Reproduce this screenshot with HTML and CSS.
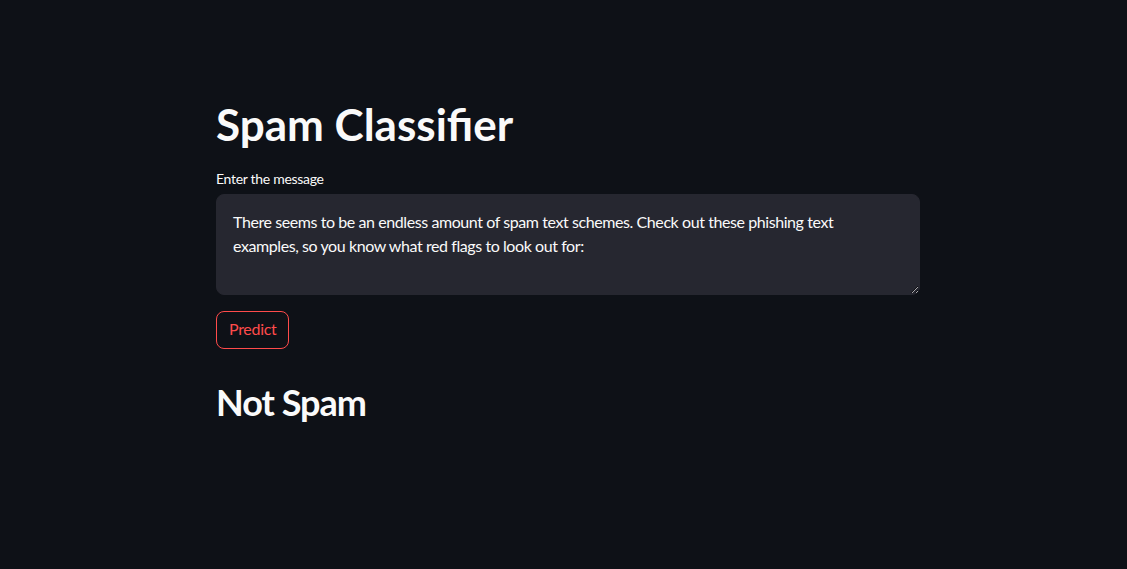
FILE: index.html
```html
<!DOCTYPE html>
<html lang="en">
<head>
<meta charset="utf-8">
<title>Spam Classifier</title>
<link rel="stylesheet" href="styles.css">
</head>
<body>
<main class="block">
  <h1 class="title">Spam Classifier</h1>
  <label class="label" for="msg">Enter the message</label>
  <div class="area-wrap">
    <textarea id="msg" class="area">There seems to be an endless amount of spam text schemes. Check out these phishing text examples, so you know what red flags to look out for:</textarea>
  </div>
  <button class="btn">Predict</button>
  <h2 class="result">Not Spam</h2>
</main>
</body>
</html>
```
FILE: styles.css
```css
html, body {
  margin: 0;
  padding: 0;
  background: #0e1117;
  color: #fafafa;
  font-family: Lato, "Noto Sans", sans-serif;
}
.block {
  width: 704px;
  margin-left: calc(50% - 347.5px);
  padding-top: 96px;
  display: flex;
  flex-direction: column;
  align-items: flex-start;
}
.title {
  margin: 0;
  font-size: 44px;
  font-weight: 700;
  line-height: 56px;
}
.label {
  margin-top: 17px;
  font-size: 14px;
  line-height: 20px;
  height: 20px;
  letter-spacing: -0.3px;
}
.area-wrap {
  margin-top: 5px;
  width: 704px;
}
.area {
  display: block;
  box-sizing: border-box;
  width: 704px;
  height: 101px;
  background: #262730;
  color: #fafafa;
  border: 1px solid #262730;
  border-radius: 8px;
  padding: 15px 28px 15px 16px;
  font-family: inherit;
  font-size: 16px;
  line-height: 24px;
  letter-spacing: -0.42px;
  outline: none;
}
.btn {
  margin-top: 16px;
  height: 38px;
  padding: 0 12px 3px;
  background: #0e1117;
  color: #ff4b4b;
  border: 1px solid #ff4b4b;
  border-radius: 8px;
  font-family: inherit;
  font-size: 16px;
  letter-spacing: -0.3px;
}
.result {
  margin: 31px 0 0;
  font-size: 36px;
  font-weight: 700;
  line-height: 44px;
  letter-spacing: -1px;
}
```
